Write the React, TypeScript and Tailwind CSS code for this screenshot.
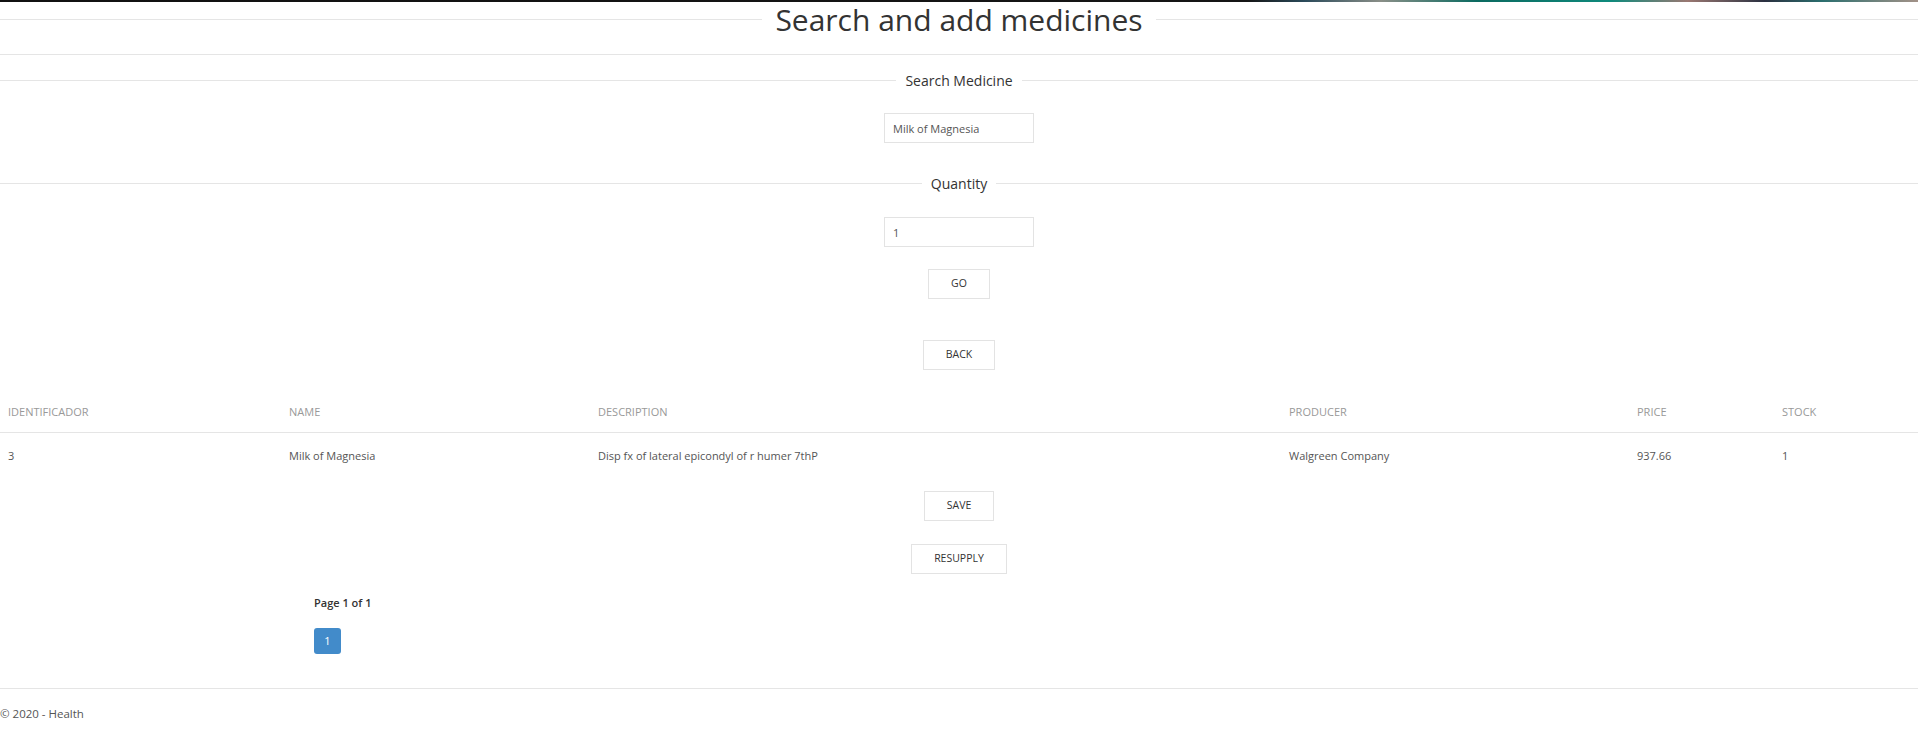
const columns = [
  { key: "id", label: "Identificador", width: "w-[281px]" },
  { key: "name", label: "Name", width: "w-[309px]" },
  { key: "description", label: "Description", width: "w-[691px]" },
  { key: "producer", label: "Producer", width: "w-[348px]" },
  { key: "price", label: "Price", width: "w-[145px]" },
  { key: "stock", label: "Stock", width: "" },
] as const;

const medicines = [
  {
    id: "3",
    name: "Milk of Magnesia",
    description: "Disp fx of lateral epicondyl of r humer 7thP",
    producer: "Walgreen Company",
    price: "937.66",
    stock: "1",
  },
];

function Legend({ label }: { label: string }) {
  return (
    <div className="flex h-[21px] items-center">
      <div className="h-px flex-1 bg-[#e5e5e5]" />
      <span className="px-[9px] text-[14px] leading-[21px] text-[#333]">{label}</span>
      <div className="h-px flex-1 bg-[#e5e5e5]" />
    </div>
  );
}

function OutlineButton({ label }: { label: string }) {
  return (
    <button className="h-[30px] border border-[#e3e3e3] bg-white px-[22px] text-[10.5px] uppercase text-[#333]">
      {label}
    </button>
  );
}

export default function App() {
  return (
    <div className="min-h-screen bg-white font-['Open_Sans',sans-serif] text-[#333]">
      <div className="h-[2px] bg-[linear-gradient(to_right,#111_0%,#151515_65%,#2a4a5a_68%,#8a8f88_72%,#0b6a60_77%,#0f8a7c_84%,#9a7872_88%,#2a3040_92%,#2b6e6e_95%,#a39288_100%)]" />

      <div className="flex h-[35px] items-center">
        <div className="h-px flex-1 bg-[#e5e5e5]" />
        <h1 className="px-[13px] text-[30px] leading-[35px] text-[#333]">Search and add medicines</h1>
        <div className="h-px flex-1 bg-[#e5e5e5]" />
      </div>
      <div className="mt-[17px] h-px bg-[#e5e5e5]" />

      <div className="mt-[15px]">
        <Legend label="Search Medicine" />
      </div>
      <div className="mt-[22px] flex justify-center">
        <input
          defaultValue="Milk of Magnesia"
          className="h-[30px] w-[150px] border border-[#e3e3e3] px-2 text-[11px] text-[#555] outline-none"
        />
      </div>

      <div className="mt-[30px]">
        <Legend label="Quantity" />
      </div>
      <div className="mt-[23px] flex justify-center">
        <input
          defaultValue="1"
          className="h-[30px] w-[150px] border border-[#e3e3e3] px-2 text-[11px] text-[#555] outline-none"
        />
      </div>

      <div className="mt-[22px] flex justify-center">
        <OutlineButton label="Go" />
      </div>
      <div className="mt-[41px] flex justify-center">
        <OutlineButton label="Back" />
      </div>

      <table className="mt-[20px] w-full border-collapse text-left">
        <thead>
          <tr className="h-[42px] border-b border-[#e5e5e5]">
            {columns.map((col) => (
              <th
                key={col.key}
                className={`${col.width} pl-2 pt-[2px] text-[11px] font-normal uppercase text-[#999]`}
              >
                {col.label}
              </th>
            ))}
          </tr>
        </thead>
        <tbody>
          {medicines.map((med) => (
            <tr key={med.id} className="h-[44px]">
              {columns.map((col) => (
                <td key={col.key} className="pl-2 pt-[4px] text-[11px] text-[#555]">
                  {med[col.key]}
                </td>
              ))}
            </tr>
          ))}
        </tbody>
      </table>

      <div className="mt-[15px] flex justify-center">
        <OutlineButton label="Save" />
      </div>
      <div className="mt-[23px] flex justify-center">
        <OutlineButton label="Resupply" />
      </div>

      <div className="pl-[314px]">
        <p className="mt-[21px] h-4 text-[11px] font-semibold leading-4 text-[#333]">Page 1 of 1</p>
        <div className="mt-[17px] flex">
          <span className="flex h-[26px] w-[27px] items-center justify-center rounded-[3px] bg-[#428bca] text-[11px] text-white">
            1
          </span>
        </div>
      </div>

      <div className="mt-[34px] h-px bg-[#e5e5e5]" />
      <footer className="mt-[17px] h-4 text-[11.5px] leading-4 text-[#555]">© 2020 - Health</footer>
    </div>
  );
}
